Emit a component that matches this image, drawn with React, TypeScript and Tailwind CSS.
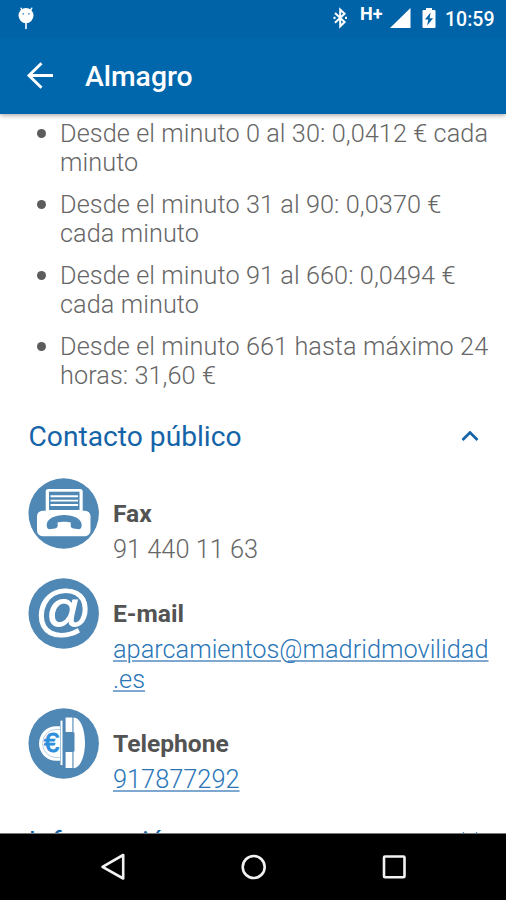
import type { ReactNode } from "react";

const RATES: string[][] = [
  ["Desde el minuto 0 al 30: 0,0412 € cada", "minuto"],
  ["Desde el minuto 31 al 90: 0,0370 €", "cada minuto"],
  ["Desde el minuto 91 al 660: 0,0494 €", "cada minuto"],
  ["Desde el minuto 661 hasta máximo 24", "horas: 31,60 €"],
];

function StatusBar() {
  return (
    <div className="flex h-[38px] items-start bg-[#0063a8]">
      <svg className="mt-[6px] ml-[17px]" width="18" height="24" viewBox="0 0 18 24">
        <path d="M4 2.2 5.6 5M14.8 2.2 13 5" stroke="#fff" strokeWidth="1.4" strokeLinecap="round" />
        <ellipse cx="9" cy="9.6" rx="7.5" ry="7.6" fill="#fff" />
        <path d="M9 15v7.4" stroke="#fff" strokeWidth="1.6" strokeLinecap="round" />
        <circle cx="6.2" cy="7.8" r="0.9" fill="#4d8fc4" />
        <circle cx="11.9" cy="7.8" r="0.9" fill="#4d8fc4" />
      </svg>
      <div className="flex-1" />
      <svg width="16" height="22" viewBox="0 0 16 22" className="mt-[7px] mr-[11px]" fill="none" stroke="#fff" strokeWidth="2">
        <path d="m2 6 9.600 9L7.200 19.300V2.500L11.600 6.700 2 15.800" />
        <path d="M.500 10.900h2M12 10.900h2" strokeWidth="2.200" />
      </svg>
      <span className="mt-[4px] w-[30px] text-[18px] leading-[20px] font-bold text-white">H+</span>
      <svg width="22" height="22" viewBox="0 0 22 22" className="mt-[7px]">
        <path d="M20.500 1v20H0z" fill="#fff" />
      </svg>
      <svg width="14" height="22" viewBox="0 0 14 22" className="mt-[7px] ml-[10px]">
        <path d="M4 1h6v2h2.500q1 0 1 1v16q0 1-1 1h-11q-1 0-1-1V4q0-1 1-1H4z" fill="#fff" />
        <path d="M8.600 5.500 3 12.600h3.300L5.200 18.600l5.900-7.400H7.600z" fill="#0063a8" />
      </svg>
      <span className="mt-[8px] mr-[11px] ml-[9px] w-[50px] text-[19.500px] leading-[24px] font-medium whitespace-nowrap text-white">
        10:59
      </span>
    </div>
  );
}

function Toolbar() {
  return (
    <div className="flex h-[76px] items-center bg-[#0067ac]">
      <svg width="28" height="28" viewBox="0 0 28 28" className="ml-[26px]" fill="none" stroke="#fff" strokeWidth="2.900">
        <path d="M27 13.500H4M15.500 1.300 3 13.500l12.500 12.200" />
      </svg>
      <h1 className="mt-[2px] ml-[31px] text-[28.300px] leading-[32px] font-medium text-white">Almagro</h1>
    </div>
  );
}

function Badge({ children }: { children: ReactNode }) {
  return (
    <svg width="72" height="72" viewBox="0 0 72 72" className="shrink-0">
      <circle cx="35.700" cy="35.500" r="35.200" fill="#4f87b5" />
      {children}
    </svg>
  );
}

function FaxIcon() {
  return (
    <Badge>
      <rect x="9" y="32.700" width="53.500" height="25.500" rx="5.500" fill="#fff" />
      <rect x="17.700" y="11" width="37" height="26" rx="2.500" fill="#fff" />
      <path d="M21 13.700h30.500v18.300H21z" fill="#4f87b5" />
      <path d="M22.500 18.200h27.500M22.500 22.600h27.500M22.500 27h27.500" stroke="#fff" strokeWidth="1.900" />
      <path
        d="M18.700 47c0-13.500 35-13.500 35 0 0 3.800-1.800 4.600-4.400 4.100l-3.800-.7c-2.400-.4-3-1.600-2.800-3.600l.2-2.200c-3-1.200-10.400-1.200-13.400 0l.2 2.200c.2 2-.4 3.200-2.800 3.600l-3.800.7c-2.600.5-4.400-.3-4.400-4.100z"
        fill="#4f87b5"
      />
    </Badge>
  );
}

function MailIcon() {
  return (
    <Badge>
      <text x="35.500" y="51" textAnchor="middle" fontSize="56" fontFamily="Liberation Sans, Arial, sans-serif" fill="#fff" stroke="#fff" strokeWidth="1.200">
        @
      </text>
    </Badge>
  );
}

function PhoneIcon() {
  return (
    <Badge>
      <path d="M32 18.300h-4a17 17.200 0 0 0 0 34.400h4z" fill="#fff" />
      <path d="M32 21.500h-4a13.500 14 0 0 0 0 28h4" fill="none" stroke="#b9d0e4" strokeWidth="1" />
      <text x="16" y="44" fontSize="27" fontFamily="Liberation Sans, Arial, sans-serif" fill="#2d8fdc" stroke="#2d8fdc" strokeWidth="1">
        €
      </text>
      <path d="M32 12h4.500v46H32z" fill="#4f87b5" />
      <path d="M33.500 12.600v44.500" stroke="#fff" strokeWidth="2" />
      <path d="M37.600 9.500h6.800v14.500h-6.800zM37.600 44h6.800v16h-6.800z" fill="#fff" />
      <path d="M45.500 9.500c7 0 11.500 12 11.500 25.300S52.500 60.200 45.500 60.200V43.500h1V24.500h-1z" fill="#fff" />
    </Badge>
  );
}

function Contact({ icon, label, className, children }: { icon: ReactNode; label: string; className: string; children: ReactNode }) {
  return (
    <div className={`flex pl-[28px] ${className}`}>
      {icon}
      <div className="ml-[13px] pt-[20px]">
        <div className="text-[24.600px] leading-[32px] font-bold text-[#535353]">{label}</div>
        <div className="mt-[4px] text-[25.350px] leading-[30px] font-light text-[#666]">{children}</div>
      </div>
    </div>
  );
}

function SectionTitle({ title, open }: { title: string; open: boolean }) {
  return (
    <div className="flex h-[34px] items-center justify-between pr-[27px] pl-[28.500px]">
      <h2 className="text-[28.200px] leading-[34px] font-normal text-[#1564a8]">{title}</h2>
      <svg
        width="18"
        height="12"
        viewBox="0 0 18 12"
        fill="none"
        stroke="#1564a8"
        strokeWidth="2.700"
        className={open ? "" : "mb-[10px]"}
      >
        <path d={open ? "m1.500 9 7.500-7.500 7.500 7.500" : "m1.500 2 7.500 7.500L16.500 2"} />
      </svg>
    </div>
  );
}

function NavBar() {
  return (
    <div className="flex h-[67px] items-center border-t border-[#777] bg-black">
      <svg width="506" height="66" viewBox="0 0 506 66" fill="none" stroke="#f2f2f2" strokeWidth="2.600" strokeLinejoin="round">
        <path d="M123.200 21v23.500L102.500 32.800z" />
        <circle cx="253.700" cy="33" r="11" />
        <rect x="384" y="22.500" width="20.500" height="20.800" rx="1" />
      </svg>
    </div>
  );
}

export default function App() {
  return (
    <div className="flex h-[900px] w-[506px] flex-col overflow-hidden bg-white font-[Roboto,sans-serif]">
      <header className="z-10 shadow-[0_1px_5px_rgba(0,0,0,0.4)]">
        <StatusBar />
        <Toolbar />
      </header>
      <main className="h-[719px] overflow-hidden">
        <ul className="flex flex-col gap-[13px] pt-[5px]">
          {RATES.map((lines) => (
            <li key={lines[0]} className="flex pl-[37px]">
              <span className="mt-[10px] mr-[14px] size-[9px] shrink-0 rounded-full bg-[#5c5c5c]" />
              <div className="text-[25.250px] leading-[29px] font-light tracking-[0.085px] whitespace-nowrap text-[#666]">
                {lines.map((line) => (
                  <div key={line}>{line}</div>
                ))}
              </div>
            </li>
          ))}
        </ul>
        <div className="mt-[30px]">
          <SectionTitle title="Contacto público" open />
        </div>
        <Contact icon={<FaxIcon />} label="Fax" className="mt-[24px] h-[100px]">
          91 440 11 63
        </Contact>
        <Contact icon={<MailIcon />} label="E-mail" className="h-[130px]">
          <a className="text-[#2a76b8] underline decoration-[#7fa8d0] decoration-2 underline-offset-2">
            aparcamientos@madridmovilidad
            <br />
            .es
          </a>
        </Contact>
        <Contact icon={<PhoneIcon />} label="Telephone" className="h-[117px]">
          <a className="text-[#2a76b8] underline decoration-[#7fa8d0] decoration-2 underline-offset-2">917877292</a>
        </Contact>
        <SectionTitle title="Información" open={false} />
      </main>
      <NavBar />
    </div>
  );
}
